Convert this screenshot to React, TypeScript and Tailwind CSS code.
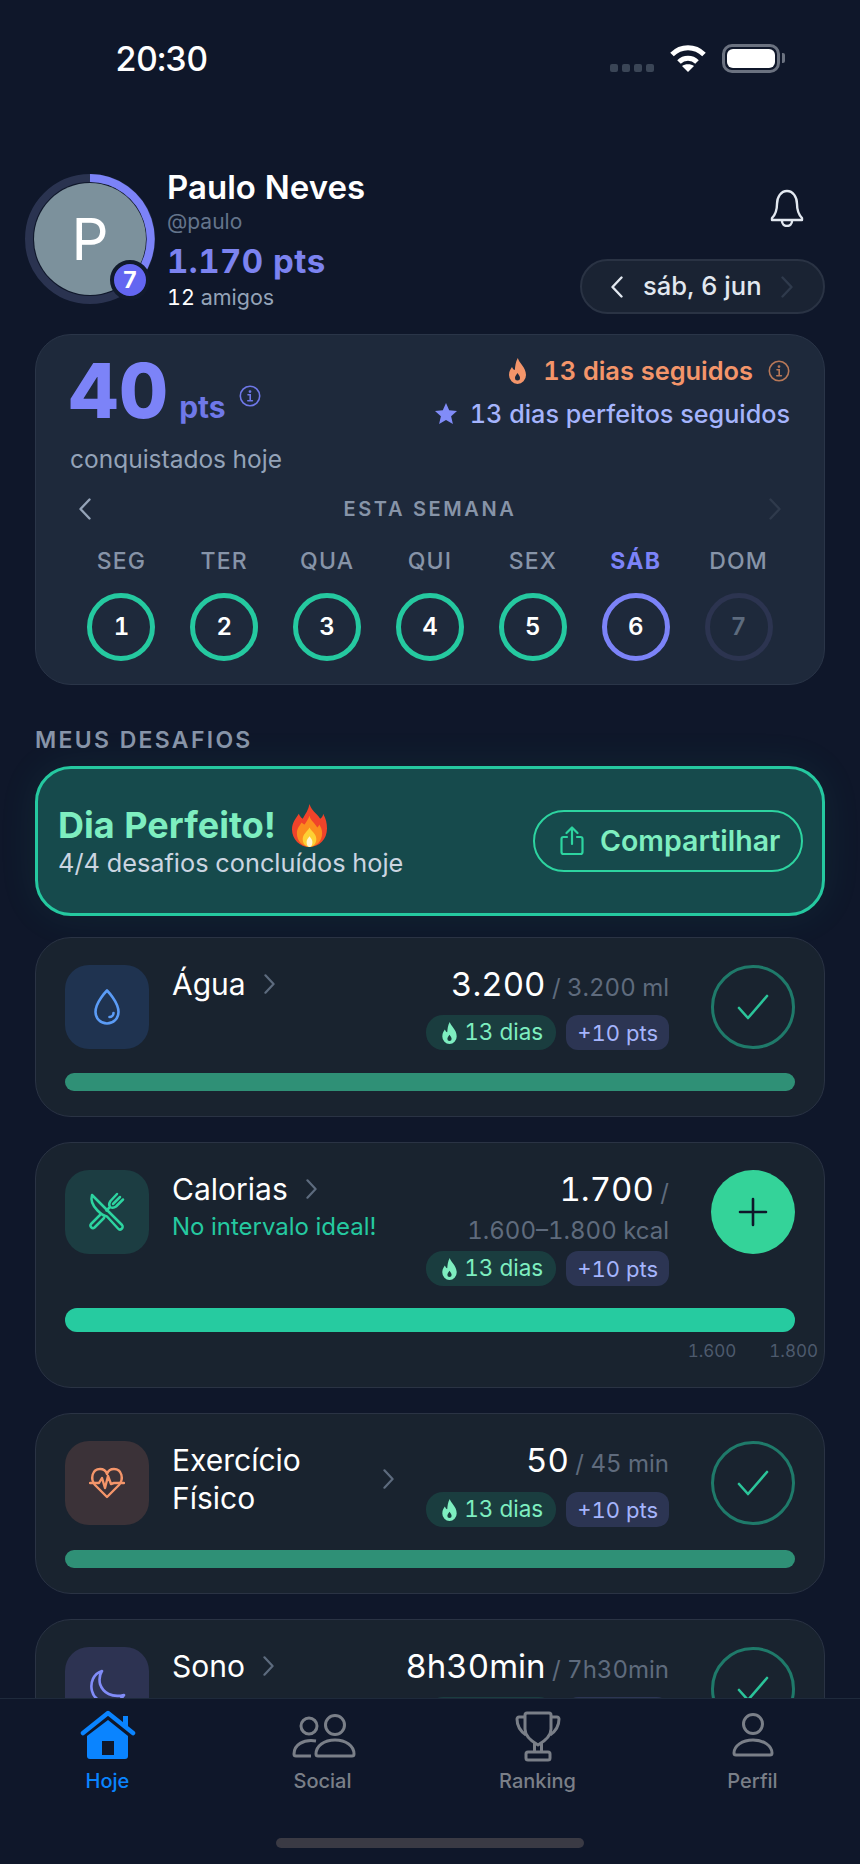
import type { ReactNode } from "react";

type Challenge = {
  title: string;
  subtitle?: string;
  value: string;
  target: string;
  icon: ReactNode;
  iconBg: string;
  done?: boolean;
  chipGap: string;
  wrapTitle?: boolean;
};

function Chevron({ left, className }: { left?: boolean; className: string }) {
  return (
    <svg viewBox="0 0 12 22" fill="none" stroke="currentColor" strokeWidth="2.4" strokeLinecap="round" strokeLinejoin="round" className={className}>
      <path d={left ? "M10.5 1.5 1.5 11l9 9.5" : "M1.5 1.5 10.5 11l-9 9.5"} />
    </svg>
  );
}

function InfoIcon({ className }: { className: string }) {
  return (
    <svg viewBox="0 0 22 22" fill="none" stroke="currentColor" strokeWidth="1.6" strokeLinecap="round" className={className}>
      <circle cx="11" cy="11" r="9.7" />
      <path d="M9 9.8h2.2v6M8.8 15.8h4.6" />
      <circle cx="11" cy="6.6" r="0.6" fill="currentColor" />
    </svg>
  );
}

function SmallFlame({ className }: { className: string }) {
  return (
    <svg viewBox="0 0 17 26" fill="currentColor" className={className}>
      <path
        fillRule="evenodd"
        d="M8.8 0c1.2 5 8.2 9 8.2 17a8.5 9 0 0 1-17 0c0-4 1.800-6 3-8 .8 2 1.800 3 2.800 3C6.300 8 6.500 4 8.800 0ZM8.500 15c-1.500 2-2.500 3.500-2.500 5a2.500 2.500 0 0 0 5 0c0-1.500-1-3-2.500-5Z"
      />
    </svg>
  );
}

function FireEmoji() {
  return (
    <svg viewBox="0 0 36 44" className="h-[43px] w-[35px]">
      <path fill="#f0432a" d="M18 0c2 7 7 9 11 15 2-1 3-3 3-5 3 5 4 10 4 15 0 11-8 19-18 19S0 36 0 26c0-7 4-11 7-16 1 2 2 4 4 5 3-5 6-9 7-15Z" />
      <path fill="#fb8c1e" d="M18 12c1 5 5 7 8 12 1-1 2-2 2-3 2 3 3 6 3 9 0 8-6 14-13 14S5 38 5 30c0-5 3-8 5-11 1 1 2 2 3 2 2-3 4-6 5-9Z" />
      <path fill="#fdd034" d="M18 24c1 3 7 6 7 12 0 5-3 8-7 8s-7-3-7-8c0-5 5-8 7-12Z" />
      <path fill="#fff6d0" d="M18 33c1 2 3 3 3 6s-1 5-3 5-3-2-3-5 2-4 3-6Z" />
    </svg>
  );
}

function DropIcon() {
  return (
    <svg viewBox="0 0 28 38" fill="none" stroke="#5b9cf6" strokeWidth="2.6" strokeLinecap="round" strokeLinejoin="round" className="h-[38px] w-[28px]">
      <path d="M14 2.500S25.500 14 25.500 24a11.500 11.500 0 0 1-23 0C2.500 14 14 2.500 14 2.500Z" />
      <path d="M20.500 25c0 2.200-1.800 4-4 4" />
    </svg>
  );
}

function CutleryIcon() {
  return (
    <svg viewBox="0 0 42 42" fill="none" stroke="#2dd4a0" strokeWidth="2.5" strokeLinecap="round" strokeLinejoin="round" className="h-[42px] w-[42px]">
      <path d="M6 4l30 30a2.500 2.500 0 0 1-4 3.500L21 25.500c-3-.5-6-2.500-9.500-6C7 15 4.500 9 6 4Z" />
      <path d="M14 24 5 33a2.500 2.500 0 0 0 3.500 3.500l9.500-9.500" />
      <path d="M31 3l-6.500 7c-1.500 2-1.500 4.500-.5 6 2 1 4 1 6-.5l7-7M34 6l-7 7M24 16l-3.500 3.500" />
    </svg>
  );
}

function HeartIcon() {
  return (
    <svg viewBox="0 0 36 32" fill="none" stroke="#f4956a" strokeWidth="2.4" strokeLinecap="round" strokeLinejoin="round" className="h-[32px] w-[36px]">
      <path d="M18 30 6 18C1 12 3 2 11 2c3 0 6 2 7 5 1-3 4-5 7-5 8 0 10 10 5 16L18 30Z" />
      <path d="M1 16h9l3-5 3 10 3-12 3 8 3-1h10" />
    </svg>
  );
}

function MoonIcon() {
  return (
    <svg viewBox="0 0 44 44" fill="none" stroke="#818cf8" strokeWidth="2.6" strokeLinejoin="round" className="h-[44px] w-[44px]">
      <path d="M17 4C8 7 5 16 7 24c2 9 13 14 23 11 4-1 7-4 9-7-12 3-21-2-24-11-1-5 0-10 2-13Z" />
    </svg>
  );
}

const challenges: Challenge[] = [
  { title: "Água", value: "3.200", target: "3.200 ml", icon: <DropIcon />, iconBg: "bg-[#1f3350]", done: true, chipGap: "mt-3" },
  { title: "Calorias", subtitle: "No intervalo ideal!", value: "1.700", target: "1.600–1.800 kcal", icon: <CutleryIcon />, iconBg: "bg-[#1c3d42]", chipGap: "mt-[5px]" },
  { title: "Exercício Físico", value: "50", target: "45 min", icon: <HeartIcon />, iconBg: "bg-[#3b3238]", done: true, chipGap: "mt-[13px]", wrapTitle: true },
  { title: "Sono", value: "8h30min", target: "7h30min", icon: <MoonIcon />, iconBg: "bg-[#2d3352]", done: true, chipGap: "mt-3" },
];

const days = [
  { label: "SEG", n: 1, state: "done" },
  { label: "TER", n: 2, state: "done" },
  { label: "QUA", n: 3, state: "done" },
  { label: "QUI", n: 4, state: "done" },
  { label: "SEX", n: 5, state: "done" },
  { label: "SÁB", n: 6, state: "today" },
  { label: "DOM", n: 7, state: "future" },
];

function ChallengeCard({ c }: { c: Challenge }) {
  return (
    <div className="rounded-[36px] border border-[#2a3344] bg-[#19232f] px-[29px] pb-[25px] pt-[27px]">
      <div className="flex items-start">
        <div className={`flex h-[84px] w-[84px] shrink-0 items-center justify-center rounded-[24px] ${c.iconBg}`}>{c.icon}</div>
        <div className="ml-[23px] min-w-0 flex-1">
          <div className="flex items-center gap-[18px]">
            <span className={`text-[30px] font-normal leading-[38px] text-white ${c.wrapTitle ? "max-w-[193px]" : ""}`}>{c.title}</span>
            <Chevron className="h-[20px] w-[11px] shrink-0 text-[#5d6b7e]" />
          </div>
          {c.subtitle && <div className="text-[24px] leading-[38px] text-[#25c9a0]">{c.subtitle}</div>}
        </div>
        <div className="flex max-w-[290px] shrink-0 flex-col items-end">
          <div className="text-right text-[33px] font-normal leading-[38px] text-white">
            {c.value}
            <span className="text-[24px] font-normal leading-none text-[#5f6b7d]"> / <span className="whitespace-nowrap">{c.target}</span></span>
          </div>
          <div className={`flex gap-[10px] ${c.chipGap}`}>
            <span className="flex h-[35px] items-center gap-[7px] rounded-[17px] bg-[#1a3d3f] pl-[16px] pr-[13px] text-[22.5px] leading-none text-[#7eeec0]">
              <SmallFlame className="h-[22px] w-[15px]" />
              13 dias
            </span>
            <span className="flex h-[35px] items-center rounded-[12px] bg-[#2c3553] px-[11px] text-[22px] leading-none text-[#a5b4fc]">+10 pts</span>
          </div>
        </div>
        <div className="ml-[42px] shrink-0">
          {c.done ? (
            <div className="flex h-[84px] w-[84px] items-center justify-center rounded-full border-[3px] border-[#1f7a6a]">
              <svg viewBox="0 0 32 26" fill="none" stroke="#2bc49a" strokeWidth="2.6" strokeLinecap="round" strokeLinejoin="round" className="h-[26px] w-[32px]">
                <path d="M2 14l9 10L30 2" />
              </svg>
            </div>
          ) : (
            <div className="flex h-[84px] w-[84px] items-center justify-center rounded-full bg-[#34d399]">
              <svg viewBox="0 0 30 30" fill="none" stroke="#0f172a" strokeWidth="2.6" strokeLinecap="round" className="h-[30px] w-[30px]">
                <path d="M15 2v26M2 15h26" />
              </svg>
            </div>
          )}
        </div>
      </div>
      {c.done ? (
        <div className="mt-[23px] h-[18px] rounded-full bg-[#2f9076]" />
      ) : (
        <>
          <div className="mt-[22px] h-[24px] rounded-full bg-[#26cba0]" />
          <div className="-mr-[23px] mt-[8px] flex justify-end gap-[33px] text-[17px] leading-[22px] text-[#4d5a6d]">
            <span>1.600</span>
            <span>1.800</span>
          </div>
        </>
      )}
    </div>
  );
}

export default function App() {
  return (
    <div className="flex h-[1864px] w-[860px] flex-col overflow-hidden bg-[#0f172a] tabular-nums [font-family:Inter,sans-serif]">
      <div className="min-h-0 flex-1 overflow-hidden">
        {/* status bar */}
        <div className="flex h-[116px] items-center justify-between pl-[115px] pr-[75px]">
          <span className="text-[34px] font-medium tracking-[-1px] text-white">20:30</span>
          <div className="flex items-center">
            <div className="mt-[20px] flex gap-[4px]">
              <span className="h-[8px] w-[8px] rounded-[2px] bg-[#3a4556]" />
              <span className="h-[8px] w-[8px] rounded-[2px] bg-[#3a4556]" />
              <span className="h-[8px] w-[8px] rounded-[2px] bg-[#3a4556]" />
              <span className="h-[8px] w-[8px] rounded-[2px] bg-[#3a4556]" />
            </div>
            <svg viewBox="0 0 38 28" className="ml-[15px] h-[28px] w-[38px]" fill="none" stroke="#fff" strokeWidth="5">
              <path d="M3 10.500C12 1.500 26 1.500 35 10.500" />
              <path d="M10 18c5-5 13-5 18 0" />
              <path d="M19 28l-6-6c3-2.500 9-2.500 12 0l-6 6Z" fill="#fff" stroke="none" />
            </svg>
            <div className="ml-[15px] flex items-center">
              <div className="h-[29px] w-[58px] rounded-[10px] border-[3px] border-[#6b7280] p-[2px]">
                <div className="h-full w-full rounded-[6px] bg-white" />
              </div>
              <span className="ml-[2px] h-[10px] w-[3px] rounded-r-[2px] bg-[#6b7280]" />
            </div>
          </div>
        </div>

        {/* header */}
        <div className="mt-[52px] flex h-[146px] pl-[25px] pr-[35px]">
          <div className="relative mt-[6px] flex h-[130px] w-[130px] shrink-0 items-center justify-center">
            <svg viewBox="0 0 130 130" fill="none" className="absolute inset-0 h-full w-full">
              <circle cx="65" cy="65" r="61" stroke="#2a3350" strokeWidth="8" />
              <path d="M65 4a61 61 0 0 1 36 110" stroke="#7c83f8" strokeWidth="8" />
            </svg>
            <div className="flex h-[112px] w-[112px] items-center justify-center rounded-full bg-[#7c919c] text-[58px] leading-none text-white">P</div>
            <div className="absolute bottom-[4px] right-[5px] flex h-[40px] w-[40px] items-center justify-center rounded-full border-[4px] border-[#111a2c] bg-[#6366f1] text-[23px] font-bold text-white">7</div>
          </div>
          <div className="ml-[12px] flex-1">
            <div className="text-[33px] font-semibold leading-[38px] text-white">Paulo Neves</div>
            <div className="mt-[1px] text-[21px] leading-[30px] text-[#64748b]">@paulo</div>
            <div className="mt-[4px] text-[33px] font-bold leading-[40px] tracking-[0.5px] text-[#7c83f0]">1.170 pts</div>
            <div className="mt-[1px] text-[21.5px] leading-[30px] text-[#94a3b8]">
              <span className="text-white">12</span> amigos
            </div>
          </div>
          <div className="flex flex-col items-end">
            <svg viewBox="0 0 34 38" fill="none" stroke="#e2e8f0" strokeWidth="2.4" strokeLinejoin="round" className="mr-[21px] mt-[21px] h-[38px] w-[34px]">
              <path d="M17 2c-6 0-10 6-10 13 0 7-2 11-5 14v2h30v-2c-3-3-5-7-5-14 0-7-4-13-10-13Z" />
              <path d="M12 32a5 5 0 0 0 10 0" />
            </svg>
            <div className="mt-[32px] flex h-[55px] w-[245px] items-center rounded-full border-2 border-[#2a3344] bg-[#1a2333] pl-[29px]">
              <Chevron left className="h-[22px] w-[12px] text-[#e2e8f0]" />
              <span className="ml-[20px] text-[25.6px] font-medium text-[#e2e8f0]">sáb, 6 jun</span>
              <Chevron className="ml-[19px] h-[22px] w-[12px] text-[#2f3a4c]" />
            </div>
          </div>
        </div>

        {/* stats card */}
        <div className="mx-[35px] mt-[20px] rounded-[36px] border border-[#2a3548] bg-[#1e293b] px-[34px] pb-[23px] pt-[17px]">
          <div className="flex items-start justify-between">
            <div>
              <div className="flex items-baseline">
                <span className="-ml-[1px] text-[76px] font-extrabold leading-[76px] tracking-[1px] text-[#7c83f8]">40</span>
                <span className="ml-[10px] text-[30px] font-bold leading-none text-[#6f78e8]">pts</span>
                <InfoIcon className="ml-[13px] h-[22px] w-[22px] -translate-y-[11px] text-[#6f78e8]" />
              </div>
              <div className="mt-[15px] text-[24.5px] leading-[32px] text-[#94a3b8]">conquistados hoje</div>
            </div>
            <div className="mt-[3px] flex flex-col items-end">
              <div className="flex items-center">
                <SmallFlame className="h-[26px] w-[17px] text-[#f4956a]" />
                <span className="ml-[17px] text-[25.4px] font-semibold leading-[32px] text-[#f4956a]">13 dias seguidos</span>
                <InfoIcon className="ml-[15px] h-[22px] w-[22px] text-[#b87858]" />
              </div>
              <div className="mt-[11px] flex items-center">
                <svg viewBox="0 0 24 24" fill="#818cf8" className="h-[24px] w-[24px]">
                  <path d="M12 1l3.200 7.300 7.800.7-5.900 5.200 1.800 7.800L12 17.900 5.100 22l1.800-7.800L1 9l7.800-.7L12 1Z" />
                </svg>
                <span className="ml-[12px] text-[25.2px] font-medium leading-[32px] text-[#a5b4fc]">13 dias perfeitos seguidos</span>
              </div>
            </div>
          </div>
          <div className="mt-[20px] flex h-[28px] items-center justify-between px-[9px]">
            <Chevron left className="h-[22px] w-[12px] text-[#94a3b8]" />
            <span className="text-[20px] font-semibold tracking-[2.6px] text-[#8794a8]">ESTA SEMANA</span>
            <Chevron className="h-[22px] w-[12px] text-[#2f3a4c]" />
          </div>
          <div className="mt-[23px] grid grid-cols-7">
            {days.map((d) => (
              <div key={d.label} className="flex flex-col items-center">
                <span className={d.state === "today" ? "text-[23px] font-bold leading-[30px] tracking-[1.200px] text-[#7c83f8]" : "text-[23px] font-medium leading-[30px] tracking-[1.200px] text-[#8794a8]"}>{d.label}</span>
                <div
                  className={
                    d.state === "done"
                      ? "mt-[17px] flex h-[68px] w-[68px] items-center justify-center rounded-full border-[5px] border-[#25c9a0] text-[24px] font-semibold text-white"
                      : d.state === "today"
                        ? "mt-[17px] flex h-[68px] w-[68px] items-center justify-center rounded-full border-[5px] border-[#7c83f8] text-[24px] font-semibold text-white"
                        : "mt-[17px] flex h-[68px] w-[68px] items-center justify-center rounded-full border-[5px] border-[#2c3450] text-[24px] font-semibold text-[#5d6b7e]"
                  }
                >
                  {d.n}
                </div>
              </div>
            ))}
          </div>
        </div>

        {/* challenges */}
        <div className="mx-[35px] mt-[40px] text-[23px] font-semibold leading-[30px] tracking-[2.300px] text-[#8794a8]">MEUS DESAFIOS</div>
        <div className="mx-[35px] mt-[11px] flex h-[150px] items-center justify-between rounded-[36px] border-[3px] border-[#25c9a0] bg-[#164a4c] pl-[20px] pr-[19px] shadow-[0_0_40px_rgba(45,212,160,0.08)]">
          <div>
            <div className="flex items-center gap-[16px] text-[36px] font-bold leading-[44px] text-[#7eeec0]">
              Dia Perfeito!
              <FireEmoji />
            </div>
            <div className="text-[25.300px] leading-[32px] text-[#cbd5e1]">4/4 desafios concluídos hoje</div>
          </div>
          <div className="flex h-[62px] w-[270px] items-center rounded-full border-2 border-[#2dd4a0] pl-[25px]">
            <svg viewBox="0 0 24 30" fill="none" stroke="#2dd4a0" strokeWidth="2.2" strokeLinecap="round" strokeLinejoin="round" className="h-[30px] w-[24px]">
              <path d="M7 11H3.500a2 2 0 0 0-2 2v13a2 2 0 0 0 2 2h17a2 2 0 0 0 2-2V13a2 2 0 0 0-2-2H17" />
              <path d="M12 18V2M6.500 7 12 1.500 17.500 7" />
            </svg>
            <span className="ml-[16px] text-[28.500px] font-semibold text-[#7eeec0]">Compartilhar</span>
          </div>
        </div>
        <div className="mx-[35px] mt-[21px] flex flex-col gap-[25px]">
          {challenges.map((c) => (
            <ChallengeCard key={c.title} c={c} />
          ))}
        </div>
      </div>

      {/* tab bar */}
      <div className="h-[166px] shrink-0 border-t border-[#1e2a3c] bg-[#0f172a]">
        <div className="grid grid-cols-4 pt-[11px]">
          <div className="flex flex-col items-center">
            <svg viewBox="0 0 56 52" className="h-[52px] w-[56px]">
              <path fill="#0a84ff" d="M43 6h5v12h-5z" />
              <path fill="none" stroke="#0a84ff" strokeWidth="4.500" strokeLinecap="round" strokeLinejoin="round" d="M3 23 28 3l25 20" />
              <path fill="#0a84ff" fillRule="evenodd" d="M28 10 48 26v20a3 3 0 0 1-3 3H10a3 3 0 0 1-3-3V26l21-16Zm-6 21v14h12V31H22Z" />
            </svg>
            <span className="mt-[6px] text-[20px] font-medium leading-[26px] text-[#0a84ff]">Hoje</span>
          </div>
          <div className="flex flex-col items-center">
            <svg viewBox="0 0 68 52" fill="none" stroke="#7a7f88" strokeWidth="3" className="h-[52px] w-[68px]">
              <circle cx="46" cy="15" r="9.500" />
              <circle cx="20" cy="16" r="8" />
              <path d="M29 46h34a2 2 0 0 0 2-2c0-8-8-14-19-14s-19 6-19 14a2 2 0 0 0 2 2Z" />
              <path d="M27 31C14 29 5 35 5 44a2 2 0 0 0 2 2h15" />
            </svg>
            <span className="mt-[6px] text-[20px] font-medium leading-[26px] text-[#7a7f88]">Social</span>
          </div>
          <div className="flex flex-col items-center">
            <svg viewBox="0 0 48 52" fill="none" stroke="#7a7f88" strokeWidth="3" strokeLinejoin="round" className="h-[52px] w-[48px]">
              <path d="M13 3h22a2 2 0 0 1 2 2v14c0 7-6 12-13 16-7-4-13-9-13-16V5a2 2 0 0 1 2-2Z" />
              <path d="M11 7H5c-1 0-2 1-2 2 0 7 3 12 9 16M37 7h6c1 0 2 1 2 2 0 7-3 12-9 16" />
              <path d="M20.500 33v10M27.500 33v10" />
              <rect x="12" y="42" width="24" height="8" rx="2" />
            </svg>
            <span className="mt-[6px] text-[20px] font-medium leading-[26px] text-[#7a7f88]">Ranking</span>
          </div>
          <div className="flex flex-col items-center">
            <svg viewBox="0 0 44 52" fill="none" stroke="#7a7f88" strokeWidth="3" className="h-[52px] w-[44px]">
              <circle cx="22" cy="14" r="9.500" />
              <path d="M5 45h34a2 2 0 0 0 2-2c0-7-8-13-19-13S3 36 3 43a2 2 0 0 0 2 2Z" />
            </svg>
            <span className="mt-[6px] text-[20px] font-medium leading-[26px] text-[#7a7f88]">Perfil</span>
          </div>
        </div>
        <div className="mx-auto mt-[44px] h-[10px] w-[308px] rounded-full bg-[#3a3a44]" />
      </div>
    </div>
  );
}
